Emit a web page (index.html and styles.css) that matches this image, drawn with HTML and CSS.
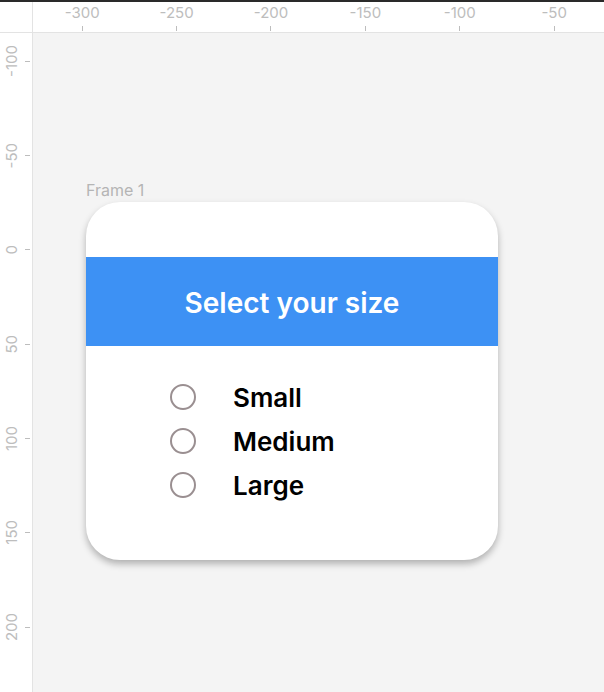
FILE: index.html
```html
<!DOCTYPE html>
<html>
<head>
<meta charset="utf-8">
<link rel="stylesheet" href="styles.css">
</head>
<body>
<div class="app">
  <div class="topbar"></div>
  <div class="hrow">
    <div class="corner"></div>
    <div class="hruler">
      <div class="hslot"><span class="hlabel">-300</span><span class="htick"></span></div>
      <div class="hslot"><span class="hlabel">-250</span><span class="htick"></span></div>
      <div class="hslot"><span class="hlabel">-200</span><span class="htick"></span></div>
      <div class="hslot"><span class="hlabel">-150</span><span class="htick"></span></div>
      <div class="hslot"><span class="hlabel">-100</span><span class="htick"></span></div>
      <div class="hslot"><span class="hlabel">-50</span><span class="htick"></span></div>
    </div>
  </div>
  <div class="main">
    <div class="vruler">
      <div class="vslots">
        <div class="vslot"><span class="vlabel">-100</span><span class="vtick"></span></div>
        <div class="vslot"><span class="vlabel">-50</span><span class="vtick"></span></div>
        <div class="vslot"><span class="vlabel">0</span><span class="vtick"></span></div>
        <div class="vslot"><span class="vlabel">50</span><span class="vtick"></span></div>
        <div class="vslot"><span class="vlabel">100</span><span class="vtick"></span></div>
        <div class="vslot"><span class="vlabel">150</span><span class="vtick"></span></div>
        <div class="vslot"><span class="vlabel">200</span><span class="vtick"></span></div>
      </div>
    </div>
    <div class="canvas">
      <div class="frame-label">Frame 1</div>
      <div class="card">
        <div class="card-header">Select your size</div>
        <div class="options">
          <div class="option"><span class="radio"></span><span class="option-text">Small</span></div>
          <div class="option"><span class="radio"></span><span class="option-text">Medium</span></div>
          <div class="option"><span class="radio"></span><span class="option-text">Large</span></div>
        </div>
      </div>
    </div>
  </div>
</div>
</body>
</html>
```
FILE: styles.css
```css
* { box-sizing: border-box; }
html, body { margin: 0; padding: 0; }
body {
  width: 604px;
  height: 692px;
  overflow: hidden;
  font-family: Inter, "Noto Sans", sans-serif;
  background: #f4f4f4;
}
.app {
  display: flex;
  flex-direction: column;
  width: 604px;
  height: 692px;
}
.topbar {
  height: 2px;
  background: #2a2a2a;
  flex: none;
}
.hrow {
  display: flex;
  height: 31px;
  flex: none;
  background: #fff;
  border-bottom: 1px solid #e3e3e3;
}
.corner {
  width: 33px;
  border-right: 1px solid #e3e3e3;
  flex: none;
}
.hruler {
  display: flex;
  padding-left: 2px;
  overflow: hidden;
  flex: 1;
}
.hslot {
  width: 94.4px;
  flex: none;
  display: flex;
  flex-direction: column;
  align-items: center;
}
.hlabel {
  font-size: 15px;
  line-height: 18px;
  margin-top: 2px;
  color: #bdbdbd;
}
.htick {
  width: 1px;
  height: 5px;
  margin-top: 4px;
  background: #bdbdbd;
}
.main {
  display: flex;
  flex: 1;
  min-height: 0;
}
.vruler {
  width: 33px;
  flex: none;
  background: #fff;
  border-right: 1px solid #e3e3e3;
  overflow: hidden;
}
.vslots {
  margin-top: -19px;
  display: flex;
  flex-direction: column;
}
.vslot {
  height: 94.33px;
  flex: none;
  display: flex;
  align-items: center;
}
.vlabel {
  width: 24px;
  writing-mode: vertical-rl;
  transform: rotate(180deg);
  font-size: 15px;
  line-height: 24px;
  text-align: center;
  color: #bdbdbd;
}
.vtick {
  width: 5px;
  height: 1px;
  margin-left: 1px;
  background: #bdbdbd;
}
.canvas {
  flex: 1;
  background: #f4f4f4;
  padding-top: 148px;
  padding-left: 53px;
}
.frame-label {
  font-size: 16px;
  line-height: 19px;
  color: #b5b5b5;
  margin-bottom: 2px;
}
.card {
  width: 412px;
  height: 358px;
  background: #fff;
  border-radius: 34px;
  overflow: hidden;
  box-shadow: 0 4px 7px rgba(0, 0, 0, 0.28);
  padding-top: 55px;
}
.card-header {
  height: 89px;
  background: #3d91f4;
  color: #fff;
  font-size: 28px;
  font-weight: 600;
  display: flex;
  align-items: center;
  justify-content: center;
  padding-top: 3px;
}
.options {
  padding-top: 29px;
  padding-left: 84px;
  display: flex;
  flex-direction: column;
}
.option {
  height: 44px;
  display: flex;
  align-items: center;
}
.radio {
  width: 26px;
  height: 26px;
  border: 2.5px solid #9a8f91;
  border-radius: 50%;
  flex: none;
}
.option-text {
  margin-left: 37px;
  font-size: 26px;
  font-weight: 600;
  color: #000;
  padding-top: 1px;
}
```
